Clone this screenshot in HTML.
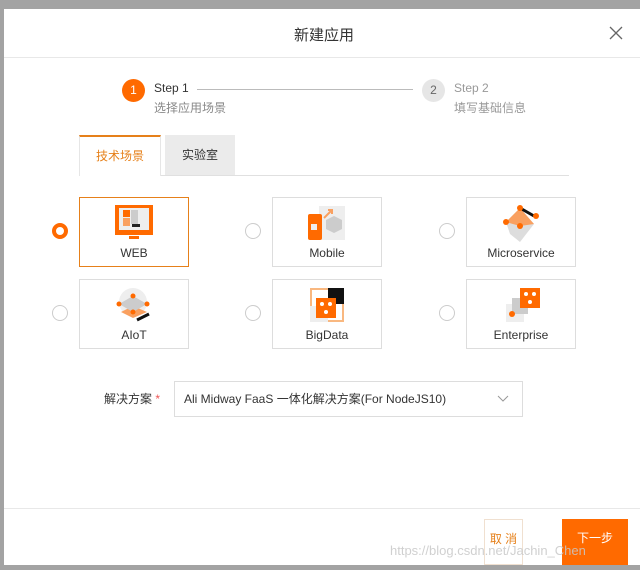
<!DOCTYPE html>
<html><head><meta charset="utf-8"><style>
*{margin:0;padding:0;box-sizing:border-box}
body{width:640px;height:570px;background:#a3a3a3;position:relative;overflow:hidden;font-family:"Liberation Sans","Noto Sans CJK SC",sans-serif;font-size:12px;color:#333}
.modal{position:absolute;left:4px;top:9px;width:640px;height:556px;background:#fff}
.abs{position:absolute}
.card{position:absolute;width:110px;height:70px;border:1px solid #ddd;background:#fff;text-align:center}
.card .lbl{position:absolute;left:0;right:0;top:48px;font-size:12px;color:#333}
.card svg{position:absolute;left:33px;top:6px}
.radio{position:absolute;width:16px;height:16px;border:1px solid #ccc;border-radius:50%;background:#fff}
</style></head><body>
<div class="modal">
 <div class="abs" style="left:0;right:0;top:15px;text-align:center;font-size:15px;color:#333">新建应用</div>
 <svg class="abs" style="left:605px;top:17px" width="14" height="14"><path d="M1 1L13 13M13 1L1 13" stroke="#666" stroke-width="1.3"/></svg>
 <div class="abs" style="left:0;right:0;top:48px;height:1px;background:#e8e8e8"></div>
 <div class="abs" style="left:118px;top:70px;width:23px;height:23px;border-radius:50%;background:#ff6a00;color:#fff;text-align:center;line-height:23px;font-size:12px">1</div>
 <div class="abs" style="left:150px;top:72px;font-size:12px;color:#333">Step 1</div>
 <div class="abs" style="left:150px;top:90px;font-size:12px;color:#888">选择应用场景</div>
 <div class="abs" style="left:193px;top:80px;width:216px;height:1px;background:#bbb"></div>
 <div class="abs" style="left:418px;top:70px;width:23px;height:23px;border-radius:50%;background:#e6e6e6;color:#666;text-align:center;line-height:23px;font-size:12px">2</div>
 <div class="abs" style="left:450px;top:72px;font-size:12px;color:#999">Step 2</div>
 <div class="abs" style="left:450px;top:90px;font-size:12px;color:#999">填写基础信息</div>
 <div class="abs" style="left:75px;top:166px;width:490px;height:1px;background:#e0e0e0"></div>
 <div class="abs" style="left:75px;top:126px;width:82px;height:41px;background:#fff;border:1px solid #e6e6e6;border-bottom:none;border-top:2px solid #e6801a;color:#e6801a;text-align:center;line-height:38px">技术场景</div>
 <div class="abs" style="left:161px;top:126px;width:70px;height:40px;background:#ebebeb;text-align:center;line-height:40px;color:#333">实验室</div>
</div>
<!-- cards, coords relative to body -->
<div class="radio" style="left:52px;top:223px;border:4px solid #ff6a00"></div>
<div class="radio" style="left:245px;top:223px"></div>
<div class="radio" style="left:439px;top:223px"></div>
<div class="radio" style="left:52px;top:305px"></div>
<div class="radio" style="left:245px;top:305px"></div>
<div class="radio" style="left:439px;top:305px"></div>
<div class="card" style="left:79px;top:197px;border-color:#e6801a">
 <svg width="42" height="38"><rect x="2" y="1" width="38" height="30" fill="#ff6a00"/><rect x="6" y="4" width="30" height="22" fill="#eee"/><rect x="10" y="6" width="7" height="7" fill="#ff6a00"/><rect x="18" y="6" width="7" height="14" fill="#ccc"/><rect x="10" y="14" width="7" height="8" fill="#f9a060"/><rect x="19" y="20" width="8" height="3" fill="#222"/><rect x="16" y="32" width="10" height="3" fill="#ff6a00"/></svg>
 <div class="lbl">WEB</div></div>
<div class="card" style="left:272px;top:197px">
 <svg width="42" height="38"><rect x="13" y="2" width="26" height="34" fill="#eee"/><rect x="2" y="10" width="14" height="26" rx="2" fill="#ff6a00"/><path d="M18 14L26 6M22 6h4v4" stroke="#f9a060" stroke-width="2" fill="none"/><path d="M20 16l8-4 8 4v9l-8 4-8-4z" fill="#ccc"/><rect x="5" y="20" width="6" height="6" fill="#eee"/></svg>
 <div class="lbl">Mobile</div></div>
<div class="card" style="left:466px;top:197px">
 <svg width="42" height="38"><path d="M6 18L20 4L34 20L20 38L10 30z" fill="#ddd"/><path d="M6 18L20 4L34 20L20 22z" fill="#f9a060"/><path d="M20 4L34 12" stroke="#111" stroke-width="3"/><circle cx="6" cy="18" r="3" fill="#ff6a00"/><circle cx="20" cy="4" r="3" fill="#ff6a00"/><circle cx="36" cy="12" r="3" fill="#ff6a00"/><circle cx="20" cy="22" r="3" fill="#ff6a00"/></svg>
 <div class="lbl">Microservice</div></div>
<div class="card" style="left:79px;top:279px">
 <svg width="42" height="38"><circle cx="20" cy="16" r="14" fill="#eee"/><path d="M8 26l12 6 14-6-14-6z" fill="#f9a060"/><path d="M24 34l12-6" stroke="#111" stroke-width="3"/><path d="M6 18L20 10L34 18L20 26z" fill="#ccc"/><circle cx="6" cy="18" r="2.5" fill="#ff6a00"/><circle cx="20" cy="10" r="2.5" fill="#ff6a00"/><circle cx="34" cy="18" r="2.5" fill="#ff6a00"/><circle cx="20" cy="26" r="2.5" fill="#ff6a00"/></svg>
 <div class="lbl">AIoT</div></div>
<div class="card" style="left:272px;top:279px">
 <svg width="42" height="38"><rect x="4" y="2" width="34" height="34" fill="#f9b880"/><rect x="6" y="4" width="30" height="30" fill="#fff"/><rect x="22" y="2" width="16" height="16" fill="#111"/><rect x="4" y="20" width="18" height="16" fill="#eee"/><rect x="10" y="12" width="20" height="20" fill="#ff6a00"/><circle cx="16" cy="18" r="2" fill="#fff"/><circle cx="24" cy="18" r="2" fill="#fff"/><circle cx="20" cy="26" r="2" fill="#fff"/></svg>
 <div class="lbl">BigData</div></div>
<div class="card" style="left:466px;top:279px">
 <svg width="42" height="38"><rect x="6" y="18" width="18" height="18" fill="#eee"/><rect x="12" y="12" width="16" height="16" fill="#ccc"/><rect x="20" y="2" width="20" height="20" fill="#ff6a00"/><circle cx="26" cy="8" r="2" fill="#fff"/><circle cx="34" cy="8" r="2" fill="#fff"/><circle cx="30" cy="16" r="2" fill="#fff"/><circle cx="12" cy="28" r="3" fill="#ff6a00"/></svg>
 <div class="lbl">Enterprise</div></div>
<div class="abs" style="left:104px;top:390px;color:#333">解决方案 <span style="color:#e55">*</span></div>
<div class="abs" style="left:174px;top:381px;width:349px;height:36px;border:1px solid #ddd;padding-left:9px;line-height:34px;color:#333">Ali Midway FaaS 一体化解决方案(For NodeJS10)</div>
<svg class="abs" style="left:497px;top:395px" width="12" height="8"><path d="M1 1l5 5 5-5" stroke="#999" fill="none"/></svg>
<div class="abs" style="left:4px;top:508px;width:636px;height:1px;background:#e8e8e8"></div>
<div class="abs" style="left:484px;top:519px;width:39px;height:46px;border:1px solid #f0e0d0;color:#e6801a;text-align:center;line-height:38px;font-size:12px">取 消</div>
<div class="abs" style="left:562px;top:519px;width:66px;height:46px;background:#ff6a00;color:#fff;text-align:center;line-height:38px;font-size:12px">下一步</div>
<div class="abs" style="left:390px;top:543px;color:rgba(200,200,200,0.85);font-size:13px">https://blog.csdn.net/Jachin_Chen</div>
</body></html>
